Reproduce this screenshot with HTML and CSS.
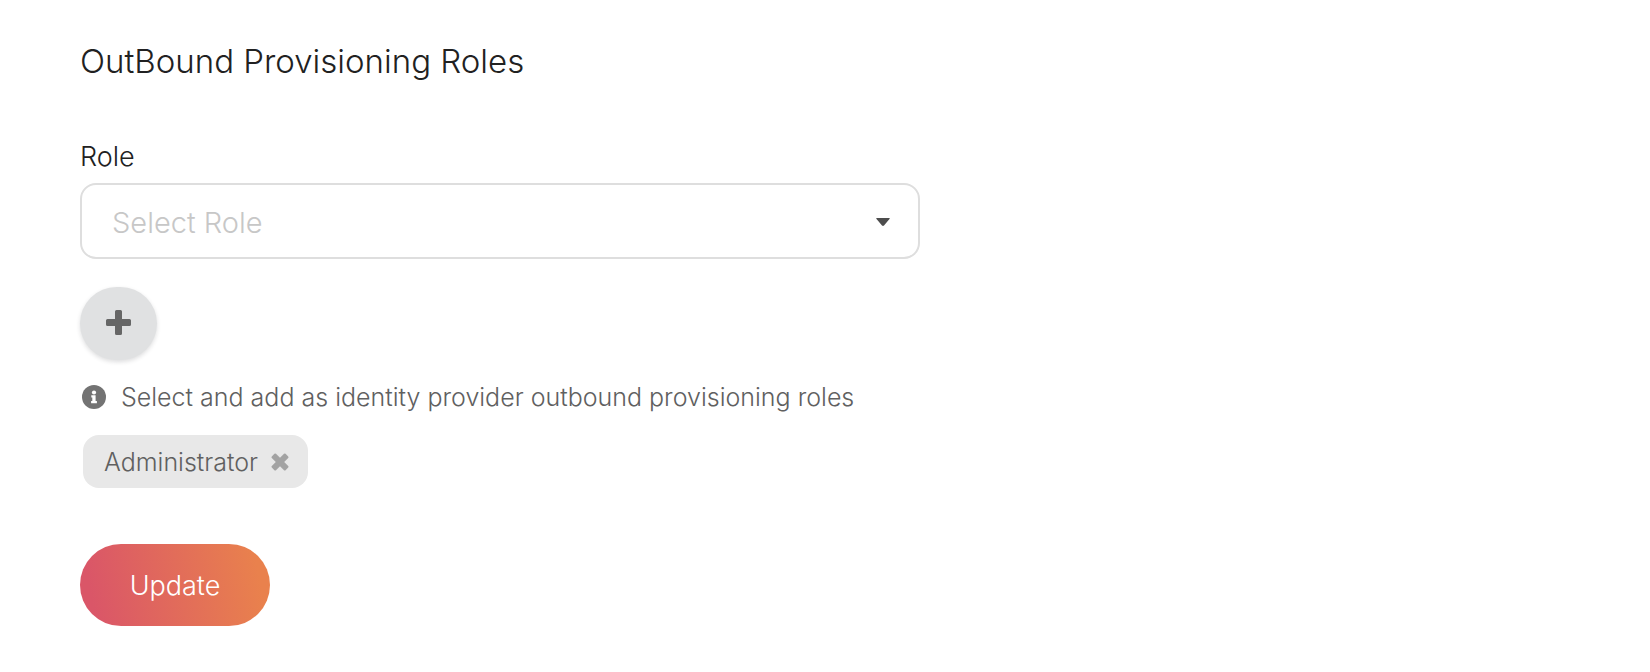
FILE: index.html
```html
<!DOCTYPE html>
<html lang="en">
<head>
<meta charset="utf-8">
<meta name="viewport" content="width=device-width, initial-scale=1">
<title>OutBound Provisioning Roles</title>
<link rel="stylesheet" href="styles.css">
</head>
<body>
<main class="page">
  <h1 class="title">OutBound Provisioning Roles</h1>
  <form class="form">
    <label class="label" for="role">Role</label>
    <div class="dropdown">
      <select class="select" id="role">
        <option>Select Role</option>
      </select>
      <svg class="caret" viewBox="0 0 14 8" aria-hidden="true"><path d="M1 0H13Q14.400 0 13.500 1L8 7.500Q7 8.400 6 7.500L.5 1Q-.4 0 1 0Z"/></svg>
    </div>
    <button class="add" type="button" aria-label="Add role">
      <svg class="plus" viewBox="0 0 25 25" aria-hidden="true"><path d="M10.500 0h4q1.500 0 1.500 1.500V9h7.500q1.500 0 1.500 1.500v4q0 1.500-1.500 1.500H16v7.500q0 1.500-1.500 1.500h-4Q9 25 9 23.500V16H1.500Q0 16 0 14.500v-4Q0 9 1.500 9H9V1.500Q9 0 10.500 0z"/></svg>
    </button>
    <p class="hint">
      <svg class="info" viewBox="0 0 24 24" aria-hidden="true"><circle cx="12" cy="12" r="12"/><circle class="info-mark" cx="12" cy="7.500" r="2.100"/><path class="info-mark" d="M9.300 10.300h4.300v5.700h1.300v2.200H9.100V16h1.200v-3.500h-1z"/></svg>
      <span>Select and add as identity provider outbound provisioning roles</span>
    </p>
    <div class="chip">
      <span>Administrator</span>
      <button class="remove" type="button" aria-label="Remove Administrator">
        <svg class="cross" viewBox="0 0 18 18" aria-hidden="true"><path d="M5 .8 9 4.800 13 .8Q13.800 0 14.600.8L17.200 3.400Q18 4.200 17.200 5L13.200 9 17.200 13Q18 13.800 17.200 14.600L14.600 17.200Q13.800 18 13 17.200L9 13.200 5 17.200Q4.200 18 3.400 17.200L.8 14.600Q0 13.800.8 13L4.800 9 .8 5Q0 4.200.8 3.400L3.400.8Q4.200 0 5 .8Z"/></svg>
      </button>
    </div>
    <button class="update" type="submit">Update</button>
  </form>
</main>
</body>
</html>
```
FILE: styles.css
```css
* {
  box-sizing: border-box;
}

body {
  margin: 0;
  background: #fff;
  color: #212121;
  font-family: Inter, "Open Sans", sans-serif;
  font-weight: 300;
}

button,
select {
  font: inherit;
}

.page {
  padding: 40px 80px;
}

.title {
  margin: 0 0 59px;
  font-size: 33px;
  font-weight: 300;
  line-height: 43px;
}

.form {
  display: flex;
  flex-direction: column;
  align-items: flex-start;
}

.label {
  margin-bottom: 11px;
  font-size: 27px;
  line-height: 30px;
}

.dropdown {
  position: relative;
  width: 100%;
  max-width: 840px;
  margin-bottom: 28px;
}

.select {
  display: block;
  width: 100%;
  height: 76px;
  padding: 2px 64px 0 30px;
  appearance: none;
  border: 2px solid #dedede;
  border-radius: 16px;
  background: #fff;
  color: #c7c7c7;
  font-size: 29px;
}

.caret {
  position: absolute;
  top: 35px;
  right: 30px;
  width: 14px;
  height: 8px;
  fill: #4d4d4d;
  pointer-events: none;
}

.add {
  display: flex;
  align-items: center;
  justify-content: center;
  width: 77px;
  height: 73px;
  margin-bottom: 20px;
  padding: 0 0 2px;
  border: 0;
  border-radius: 40px;
  background: #e0e1e2;
  box-shadow: 0 2px 4px rgba(34, 36, 38, 0.15);
}

.plus {
  width: 25px;
  height: 25px;
  fill: #666;
}

.hint {
  display: flex;
  align-items: center;
  gap: 15px;
  margin: 0 0 21px;
  padding-left: 2px;
  color: #606060;
  font-size: 25px;
  line-height: 34px;
}

.info {
  flex: none;
  width: 24px;
  height: 24px;
  fill: #737373;
}

.info-mark {
  fill: #fff;
}

.chip {
  display: flex;
  align-items: center;
  justify-content: space-between;
  gap: 11px;
  min-width: 225px;
  height: 53px;
  margin: 0 0 56px 3px;
  padding: 0 19px 0 21px;
  border-radius: 16px;
  background: #e8e8e8;
  color: #606060;
  font-size: 25px;
}

.remove {
  display: flex;
  padding: 0;
  border: 0;
  background: none;
}

.cross {
  width: 18px;
  height: 18px;
  fill: #a3a3a3;
}

.update {
  min-width: 190px;
  height: 82px;
  padding: 0 46px;
  border: 0;
  border-radius: 41px;
  background: linear-gradient(80deg, #da5668 8%, #e9814d 92%);
  color: #fff;
  font-size: 27px;
}
```
